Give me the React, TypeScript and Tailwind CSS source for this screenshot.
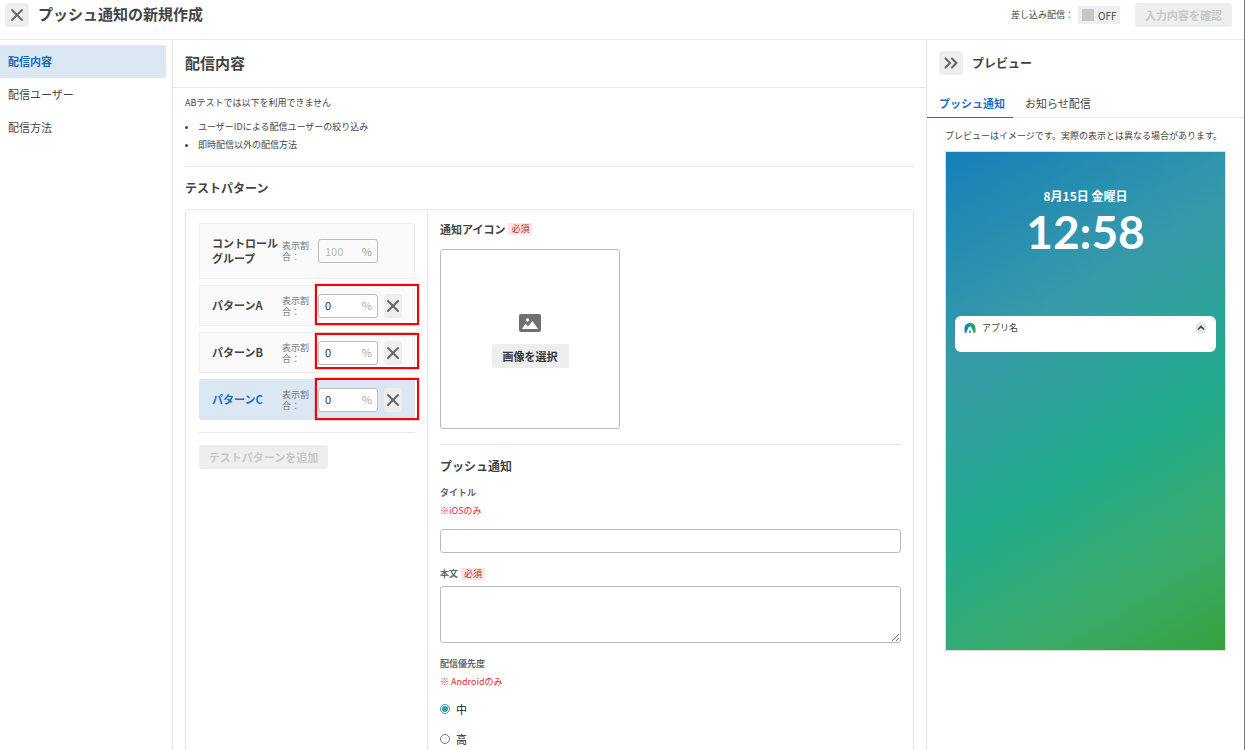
import React, { useState } from "react";
import { ChevronsRight, X } from "lucide-react";

interface Pattern {
  name: string;
  active: boolean;
  highlight: string;
}

const menu = ["配信内容", "配信ユーザー", "配信方法"];

const patterns: Pattern[] = [
  { name: "パターンA", active: false, highlight: "-top-[2px] h-[41px]" },
  { name: "パターンB", active: false, highlight: "top-0 h-[36px]" },
  { name: "パターンC", active: true, highlight: "-top-[2px] h-[42px]" },
];

function RequiredBadge() {
  return <span className="bg-[#fde4e1] px-[3px] text-[9px] leading-3 font-normal text-[#a8323a]">必須</span>;
}

function RatioField({ id, value, disabled }: { id: string; value: string; disabled?: boolean }) {
  return (
    <>
      <label htmlFor={id} className="w-9 shrink-0 pr-2 text-[9px] leading-[11px] text-[#777]">
        表示割合：
      </label>
      <div
        className={`flex h-6 w-[60px] shrink-0 items-center rounded-[3px] border border-[#bbb] pr-[5px] pl-1.5 text-[11px] ${
          disabled ? "bg-[#fafafa] text-[#999]" : "bg-white text-[#aaa]"
        }`}
      >
        <input
          id={id}
          type="text"
          defaultValue={value}
          disabled={disabled}
          className="w-0 min-w-0 flex-1 bg-transparent text-[#333] outline-none disabled:text-[#bbb]"
        />
        <span>%</span>
      </div>
    </>
  );
}

function PatternRow({ pattern }: { pattern: Pattern }) {
  return (
    <li
      className={`relative flex h-[41px] items-center border pl-3 ${
        pattern.active ? "rounded-[2px] border-[#dbe7f3] bg-[#dbe7f3]" : "border-[#eee] bg-[#fafafa]"
      }`}
    >
      <span className={`w-[70px] shrink-0 text-[11px] font-bold ${pattern.active ? "text-[#1a73c8]" : ""}`}>
        {pattern.name}
      </span>
      <RatioField id={pattern.name} value="0" />
      <button
        type="button"
        aria-label="削除"
        className="ml-1.5 flex h-6 w-[18px] shrink-0 items-center justify-center rounded-[3px] bg-[#eee] text-[#666]"
      >
        <X size={20} strokeWidth={2.4} className="shrink-0" />
      </button>
      <div
        className={`pointer-events-none absolute -right-[5px] w-[104px] border-2 border-[#f80000] shadow-[0_0_1px_#f80000] ${pattern.highlight}`}
      />
    </li>
  );
}

function AppLogo() {
  return (
    <svg width="12" height="12" viewBox="0 0 12 12" aria-hidden="true">
      <defs>
        <linearGradient id="logo" x1="0" x2="1" y1="0" y2="0">
          <stop offset="0" stopColor="#1b7fc0" />
          <stop offset="0.5" stopColor="#249a8c" />
          <stop offset="1" stopColor="#35a34a" />
        </linearGradient>
      </defs>
      <path d="M0.5 10.500V6.200a5.500 5.500 0 0 1 11 0V10.500L9.800 11 7 4.800H5L2.200 11Z" fill="url(#logo)" />
      <path d="M6 7.400 7.300 10.800H4.700Z" fill="#249a7c" />
    </svg>
  );
}

function Preview() {
  return (
    <aside className="w-[318px] shrink-0 border-l border-[#e4e6e8]">
      <div className="flex items-center gap-[9px] px-3 pt-[11px]">
        <button type="button" aria-label="閉じる" className="flex size-6 items-center justify-center rounded-[3px] bg-[#eee] text-[#666]">
          <ChevronsRight size={22} strokeWidth={2.2} />
        </button>
        <h2 className="text-[12px] font-bold">プレビュー</h2>
      </div>
      <div className="mt-3.5 flex h-[29px] border-b border-[#e4e6e8] text-[11px]">
        <button type="button" className="-mb-px border-b border-[#1a73c8] pr-2 pl-3 font-bold text-[#1a73c8]">
          プッシュ通知
        </button>
        <button type="button" className="pr-2 pl-3">
          お知らせ配信
        </button>
      </div>
      <div className="px-[18px] pt-[9px]">
        <p className="text-[9px] leading-[18px] whitespace-nowrap">
          プレビューはイメージです。実際の表示とは異なる場合があります。
        </p>
        <div className="mt-[6px] h-[500px] border border-[#ddd] bg-[linear-gradient(150deg,#1580b9_0%,#389ba9_33%,#22ab8c_60%,#3aab6b_82%,#36a23e_100%)] px-[9px] pt-[36px] text-white">
          <p className="text-center text-[12px] leading-4 font-bold">8月15日 金曜日</p>
          <p className="text-center font-['Lato',sans-serif] text-[46px] leading-[56px] font-bold">12:58</p>
          <div className="mt-[56px] flex h-9 items-start gap-1.5 rounded-[6px] bg-white px-[9px] pt-1.5 text-[9px] text-[#444]">
            <AppLogo />
            <span className="flex-1 leading-3">アプリ名</span>
            <span className="flex size-3 items-center justify-center rounded-full bg-[#e4e6e8]">
              <svg width="8" height="6" viewBox="0 0 8 6" fill="none" stroke="#444" strokeWidth="1.6">
                <path d="m1 4.500 3-3 3 3" />
              </svg>
            </span>
          </div>
        </div>
      </div>
    </aside>
  );
}

export default function App() {
  const [priority, setPriority] = useState("中");

  return (
    <div className="flex h-screen flex-col overflow-hidden border-r border-[#777] bg-white font-['Noto_Sans_CJK_JP',sans-serif] text-[#444]">
      <header className="flex h-10 shrink-0 items-start border-b border-[#e4e6e8] pt-[3px] pr-3 pl-[5px]">
        <button type="button" aria-label="閉じる" className="flex size-6 items-center justify-center rounded-[3px] bg-[#eee] text-[#666]">
          <X size={20} strokeWidth={2.2} />
        </button>
        <h1 className="ml-[9px] flex-1 text-[15px] leading-[22px] font-bold">プッシュ通知の新規作成</h1>
        <span className="text-[9px] leading-6">差し込み配信：</span>
        <button type="button" role="switch" aria-checked="false" className="mt-[3px] ml-1 flex h-[18px] w-[42px] items-center gap-1 bg-[#eee] pl-1 text-[10px]">
          <span className="size-3 bg-[#c6c6c6]" />
          OFF
        </button>
        <button type="button" disabled className="ml-[15px] h-6 w-[97px] rounded-[3px] bg-[#eee] text-[11px] font-bold text-[#c8c8c8]">
          入力内容を確認
        </button>
      </header>

      <div className="flex min-h-0 flex-1">
        <nav className="w-[173px] shrink-0 border-r border-[#e4e6e8] pt-[5px] pr-1.5 text-[11px] leading-[33px]">
          {menu.map((item, i) => (
            <a
              key={item}
              href="#"
              className={`block pl-2 ${i === 0 ? "rounded-r-[2px] bg-[#dbe7f3] font-bold text-[#1a6bbd]" : ""}`}
            >
              {item}
            </a>
          ))}
        </nav>

        <main className="min-w-0 flex-1">
          <h2 className="h-12 border-b border-[#e4e6e8] px-3 text-[15px] leading-[45px] font-bold">配信内容</h2>
          <div className="px-3 pt-1.5">
            <p className="text-[9px] leading-[18px]">ABテストでは以下を利用できません</p>
            <ul className="mt-1.5 list-disc pl-[13px] text-[9px] leading-[18px]">
              <li>ユーザーIDによる配信ユーザーの絞り込み</li>
              <li>即時配信以外の配信方法</li>
            </ul>
            <hr className="mt-3 border-[#e4e6e8]" />
            <h3 className="mt-3 text-[12px] leading-[18px] font-bold">テストパターン</h3>

            <div className="mt-3 flex h-[600px] rounded-t-[3px] border border-[#e4e6e8]">
              <section className="w-[242px] shrink-0 border-r border-[#e4e6e8] py-[13px] pr-3 pl-[13px]">
                <ul className="flex flex-col gap-1.5">
                  <li className="flex h-14 items-center border border-[#eee] bg-[#fafafa] pl-3">
                    <span className="w-[70px] shrink-0 text-[11px] leading-[15px] font-bold">
                      コントロール
                      <br />
                      グループ
                    </span>
                    <RatioField id="control" value="100" disabled />
                  </li>
                  {patterns.map((p) => (
                    <PatternRow key={p.name} pattern={p} />
                  ))}
                </ul>
                <hr className="mt-3 border-[#e4e6e8]" />
                <button type="button" disabled className="mt-3 h-6 w-[129px] rounded-[3px] bg-[#eee] text-[11px] font-bold text-[#c8c8c8]">
                  テストパターンを追加
                </button>
              </section>

              <section className="min-w-0 flex-1 px-3 pt-2.5">
                <h4 className="flex items-center gap-[3px] text-[11px] leading-[18px] font-bold">
                  通知アイコン <RequiredBadge />
                </h4>
                <div className="mt-[11px] flex size-[180px] flex-col items-center justify-center rounded-[3px] border border-[#bbb] pt-1">
                  <svg width="22" height="18" viewBox="0 0 22 18" aria-hidden="true">
                    <rect width="22" height="18" rx="2" fill="#707070" />
                    <circle cx="8.500" cy="6" r="1.700" fill="#fff" />
                    <path d="M3 15 6.500 9.500l2.500 3L13.500 7 19 15Z" fill="#fff" />
                  </svg>
                  <button type="button" className="mt-3 h-6 w-[77px] rounded-[3px] bg-[#eee] text-[11px] leading-[22px] font-bold text-[#333]">
                    画像を選択
                  </button>
                </div>
                <hr className="mt-[15px] border-[#e4e6e8]" />

                <h3 className="mt-3 text-[12px] leading-[18px] font-bold">プッシュ通知</h3>
                <label htmlFor="title" className="mt-[9px] block text-[9px] leading-[18px] font-bold text-[#666]">
                  タイトル
                </label>
                <p className="text-[9px] leading-[18px] text-[#e8262d]">※iOSのみ</p>
                <input id="title" type="text" className="mt-[9px] block h-6 w-full rounded-[3px] border border-[#bbb] px-1.5 text-[11px]" />

                <label htmlFor="body" className="mt-3 flex items-center gap-[3px] text-[9px] leading-[18px] font-bold text-[#666]">
                  本文 <RequiredBadge />
                </label>
                <textarea id="body" className="mt-[3px] block h-[57px] w-full rounded-[3px] border border-[#bbb] px-1.5 text-[11px]" />

                <fieldset>
                  <legend className="pt-3 text-[9px] leading-[18px] font-bold text-[#666]">配信優先度</legend>
                  <p className="text-[9px] leading-[18px] text-[#e8262d]">※ Androidのみ</p>
                  <div className="mt-[9px] flex flex-col gap-3">
                    {["中", "高"].map((level) => (
                      <label key={level} className="flex h-[18px] items-center gap-1.5 text-[11px] text-[#222]">
                        <input
                          type="radio"
                          name="priority"
                          checked={priority === level}
                          onChange={() => setPriority(level)}
                          className="size-2.5 accent-[#3a9aaa]"
                        />
                        {level}
                      </label>
                    ))}
                  </div>
                </fieldset>
              </section>
            </div>
          </div>
        </main>

        <Preview />
      </div>
    </div>
  );
}
